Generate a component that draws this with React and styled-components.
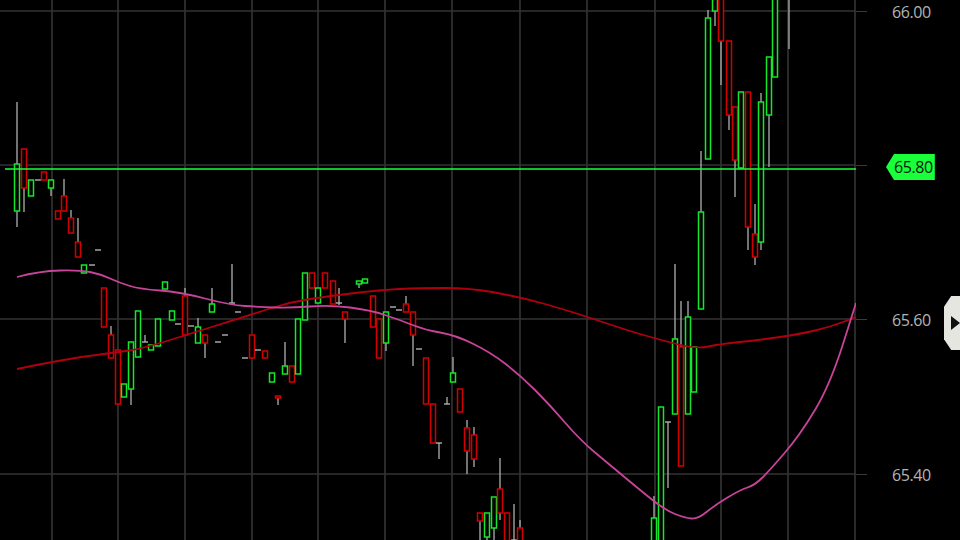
import React from "react";
import styled, { createGlobalStyle } from "styled-components";

const Global = createGlobalStyle`
  html, body { margin: 0; padding: 0; background: #000; }
  #root { width: 960px; height: 540px; }
`;

const Page = styled.div`
  display: flex;
  width: 960px;
  height: 540px;
  background: #000;
  overflow: hidden;
  font-family: "Open Sans", "Liberation Sans", sans-serif;
`;

const Plot = styled.svg`
  flex: 0 0 856px;
  height: 540px;
  display: block;
`;

const Axis = styled.div`
  position: relative;
  flex: 1;
  height: 540px;
`;

const Tick = styled.div`
  position: absolute;
  left: 0;
  width: 11px;
  height: 1px;
  background: #3a3a3a;
`;

const Label = styled.div`
  position: absolute;
  left: 36px;
  font-size: 16px;
  color: #b4b4b4;
  transform: translateY(-50%);
  letter-spacing: -0.4px;
`;

const Badge = styled.div`
  position: absolute;
  left: 30px;
  top: 154px;
  height: 26px;
  padding: 0 2px 0 8px;
  background: #19ff3c;
  color: #0a1a0a;
  font-size: 16px;
  line-height: 26px;
  letter-spacing: -0.4px;
  clip-path: polygon(8px 0, 100% 0, 100% 100%, 8px 100%, 0 50%);
`;

const Scroller = styled.div`
  position: absolute;
  left: 88px;
  top: 296px;
  width: 24px;
  height: 54px;
  background: #e6e6e0;
  clip-path: polygon(30% 0, 100% 0, 100% 100%, 30% 100%, 0 80%, 0 20%);
  &::after {
    content: "";
    position: absolute;
    left: 7px;
    top: 20px;
    border-left: 9px solid #111;
    border-top: 7px solid transparent;
    border-bottom: 7px solid transparent;
  }
`;

const G = "#14e82a", R = "#d40000", D = "#b0b0b0";
const candles = [
  [17,164,211,102,227,G],[24,149,188,149,212,R],[31,180,196,180,196,G],[38,180,180,180,180,D],
  [44,172,180,172,180,R],[51,180,188,180,196,G],[58,211,219,211,219,R],[64,196,211,179,211,R],
  [71,218,233,210,233,R],[78,242,257,218,257,R],[84,265,273,265,273,G],[92,265,265,265,265,D],
  [98,250,250,250,250,D],[104,288,327,288,327,R],[111,335,358,326,358,R],[118,350,404,350,404,R],
  [124,384,397,384,397,G],[131,342,389,342,405,G],[138,311,357,311,357,G],[145,342,342,335,342,D],
  [151,345,350,345,350,G],[158,319,346,319,346,G],[165,282,289,282,289,G],[172,311,320,311,320,G],
  [178,324,324,324,324,D],[185,296,335,288,335,R],[191,326,326,326,326,D],[198,327,343,318,343,G],
  [205,335,343,335,358,R],[212,304,312,288,312,G],[218,342,342,342,342,D],[225,335,335,335,335,D],
  [232,303,303,264,303,D],[238,312,312,312,312,D],[245,358,358,358,358,D],[252,335,358,335,358,R],
  [258,350,350,350,350,D],[265,351,358,351,358,R],[272,373,382,373,382,G],[278,396,396,396,405,R],
  [285,366,374,342,374,G],[292,366,382,366,382,R],[298,319,374,319,374,G],[305,273,320,273,320,G],
  [312,273,288,273,288,R],[318,288,303,288,303,G],[325,273,288,273,288,R],[333,281,304,281,304,R],
  [339,303,303,288,305,D],[345,312,319,312,343,R],[359,281,284,281,288,G],[365,279,283,279,283,G],
  [373,296,327,296,327,R],[379,319,358,319,358,R],[386,312,343,312,351,G],[393,307,307,307,307,D],
  [399,310,310,310,310,D],[406,304,312,296,312,R],[413,312,335,312,366,R],[419,349,349,349,349,D],
  [426,358,404,358,404,R],[433,404,443,404,443,R],[439,443,443,443,459,D],[447,404,404,397,404,D],
  [453,373,382,357,382,G],[460,389,412,389,412,R],[467,428,451,420,474,R],[474,435,459,427,467,R],
  [480,513,521,513,540,R],[487,513,537,513,540,G],[494,497,528,497,540,G],[500,489,513,458,520,R],
  [507,513,545,513,545,R],[514,540,540,504,540,D],[520,528,545,520,545,R],
  [654,518,545,496,545,G],[661,407,545,407,545,G],[668,422,422,422,488,D],[675,339,414,264,414,G],
  [681,347,466,301,466,R],[688,317,414,301,414,G],[694,347,392,347,392,G],[701,212,309,151,309,G],
  [708,18,159,10,159,G],[715,-5,11,-5,26,G],[721,-5,41,-5,85,R],[729,41,115,41,130,R],
  [735,107,160,107,197,R],[741,92,168,92,168,G],[748,92,227,92,250,R],[755,234,257,204,265,R],
  [761,102,242,93,250,G],[769,57,115,57,167,G],[775,-5,77,-5,77,G],[789,-5,-5,-5,49,D],
];

const darkMA = [[17,369],[60,360],[118,352],[140,349],[180,337],[250,315],[290,302],[330,296],[380,290],[420,288],[470,288],[520,297],[570,311],[620,328],[660,340],[697,349],[720,344],[760,340],[800,334],[830,327],[856,317]];
const pinkMA = [[17,277],[40,271],[80,270],[100,274],[120,283],[140,289],[180,292],[230,305],[260,307],[290,308],[330,305],[370,310],[400,320],[425,330],[455,335],[490,352],[520,375],[550,405],[580,440],[610,465],[640,490],[665,510],[685,518],[698,519],[715,505],[740,490],[755,485],[770,470],[800,435],[830,385],[856,303]];

// smooth via quadratic midpoints
const path = (pts) => {
  let d = `M${pts[0][0]} ${pts[0][1]}`;
  for (let i = 1; i < pts.length - 1; i++) {
    const mx = (pts[i][0] + pts[i + 1][0]) / 2, my = (pts[i][1] + pts[i + 1][1]) / 2;
    d += ` Q${pts[i][0]} ${pts[i][1]} ${mx} ${my}`;
  }
  const l = pts[pts.length - 1];
  return d + ` L${l[0]} ${l[1]}`;
};
const vlines = [52,118,185,252,318,385,452,520,587,655,721,788,855];
const hlines = [11,165,319,474];
const labels = [["66.00",11],["65.60",319],["65.40",474]];

export default function App() {
  return (
    <Page>
      <Global />
      <Plot viewBox="0 0 856 540">
        {vlines.map((x) => <line key={x} x1={x} x2={x} y1={0} y2={540} stroke="#3c3c3c" strokeWidth="1.4" />)}
        {hlines.map((y) => <line key={y} x1={0} x2={856} y1={y} y2={y} stroke="#333" strokeWidth="1.4" />)}
        {candles.map(([x, bt, bb, wt, wb, c], i) => (
          <g key={i}>
            {wt < bt && <line x1={x} x2={x} y1={wt} y2={bt} stroke={D} strokeWidth="1.3" />}
            {wb > bb && <line x1={x} x2={x} y1={bb} y2={wb} stroke={D} strokeWidth="1.3" />}
            {c === D ? (
              <line x1={x - 3} x2={x + 3} y1={bt} y2={bt} stroke={D} strokeWidth="1.4" />
            ) : (
              <rect x={x - 2.5} y={bt} width={5} height={Math.max(bb - bt, 2)} fill="#000" stroke={c} strokeWidth="1.5" />
            )}
          </g>
        ))}
        <line x1={5} x2={856} y1={169} y2={169} stroke="#19ff3c" strokeWidth="1.4" />
        <path d={path(darkMA)} fill="none" stroke="#b00010" strokeWidth="1.8" />
        <path d={path(pinkMA)} fill="none" stroke="#c8449a" strokeWidth="1.8" />
      </Plot>
      <Axis>
        {hlines.map((y) => <Tick key={y} style={{ top: y }} />)}
        {labels.map(([t, y]) => <Label key={t} style={{ top: y + 1 }}>{t}</Label>)}
        <Badge>65.80</Badge>
        <Scroller />
      </Axis>
    </Page>
  );
}
